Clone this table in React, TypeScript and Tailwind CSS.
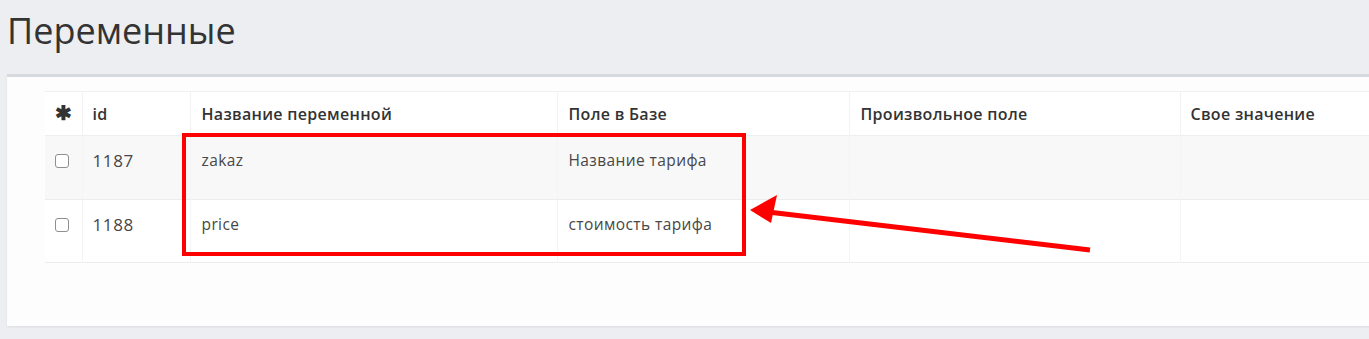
import React from "react";

const ROWS = [
  { id: 1187, name: "zakaz", field: "Название тарифа" },
  { id: 1188, name: "price", field: "стоимость тарифа" },
];

function Checkbox() {
  return <span className="block h-[14px] w-[14px] rounded-[3px] border border-[#8f8f8f] bg-white" />;
}

export default function App() {
  return (
    <div className="relative h-[339px] w-[1369px] overflow-hidden bg-[#eceef2] font-['Open_Sans',sans-serif] text-[#474747]">
      <h1 className="pl-[7px] pt-[8px] text-[36px] leading-[46px] text-[#333]">Переменные</h1>

      <div className="ml-[7px] mt-[20px] h-[252px] w-[1420px] border-t-[3px] border-[#d6d9de] bg-[#fdfdfd] pl-[38px] pt-[14px] shadow-[0_1px_2px_rgba(0,0,0,0.08)]">
        <table className="border-collapse text-left">
          <thead>
            <tr className="h-[44px] border-t border-[#f0f0f0] bg-white text-[16px] tracking-[0.3px] text-[#333]">
              <th className="w-[37px] pl-[10px] font-bold">
                <span className="text-[20px] leading-none">✱</span>
              </th>
              <th className="w-[108px] border-l border-[#f2f2f2] pl-[10px] font-semibold">id</th>
              <th className="w-[367px] border-l border-[#f2f2f2] pl-[11px] font-semibold">Название переменной</th>
              <th className="w-[292px] border-l border-[#f2f2f2] pl-[11px] font-semibold">Поле в Базе</th>
              <th className="w-[331px] border-l border-[#f2f2f2] pl-[11px] font-semibold">Произвольное поле</th>
              <th className="w-[240px] border-l border-[#f2f2f2] pl-[10px] font-semibold">Свое значение</th>
            </tr>
          </thead>
          <tbody className="text-[15.5px] tracking-[0.4px]">
            {ROWS.map((r, i) => (
              <tr
                key={r.id}
                className={
                  i === 0
                    ? "h-[64px] border-t border-[#eeeeee] bg-[#f8f8f8] align-top"
                    : "h-[63px] border-y border-[#ececec] bg-white align-top"
                }
              >
                <td className="pl-[10px] pt-[18px]">
                  <Checkbox />
                </td>
                <td className="border-l border-[#f4f4f4] pl-[10px] pt-[12px] text-[17px] tracking-[0.6px]">{r.id}</td>
                <td className="border-l border-[#f4f4f4] pl-[11px] pt-[13px]">{r.name}</td>
                <td className="border-l border-[#f4f4f4] pl-[11px] pt-[13px]">{r.field}</td>
                <td className="border-l border-[#f4f4f4]" />
                <td className="border-l border-[#f4f4f4]" />
              </tr>
            ))}
          </tbody>
        </table>
      </div>

      <svg className="pointer-events-none absolute left-0 top-0" width="1369" height="339">
        <rect x="184" y="135" width="560" height="119" fill="none" stroke="#ff0000" strokeWidth="4" />
        <line x1="1090" y1="250" x2="768" y2="212" stroke="#ff0000" strokeWidth="5" />
        <polygon points="750,210 777,195 771,223" fill="#ff0000" />
      </svg>
    </div>
  );
}
